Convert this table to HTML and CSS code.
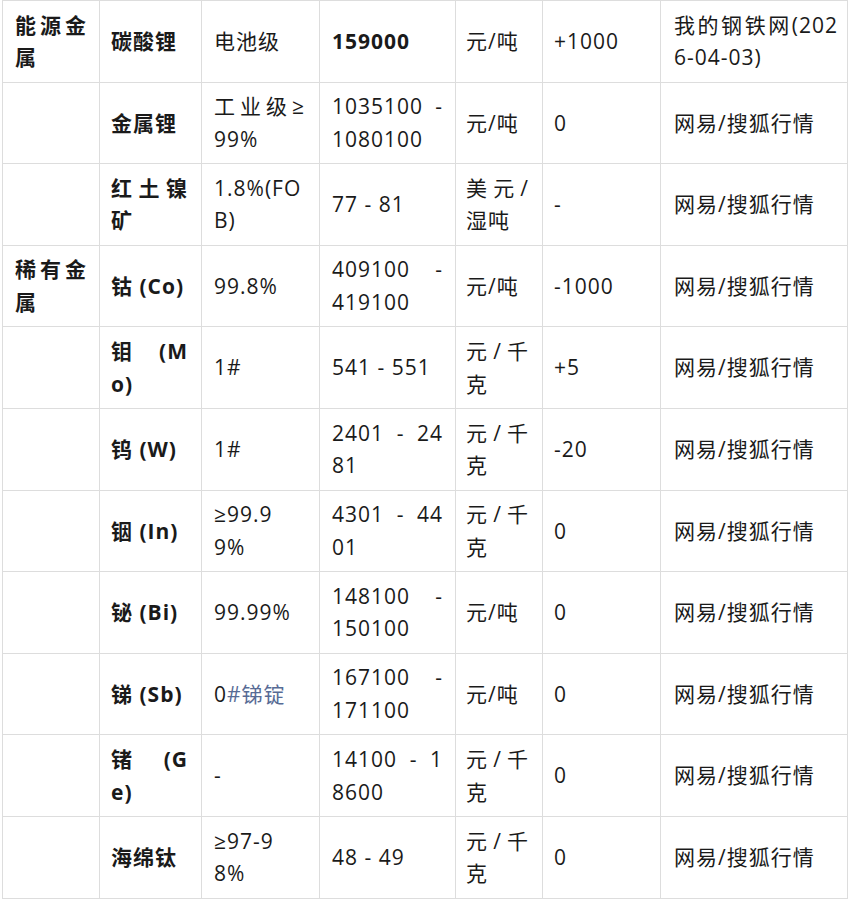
FILE: index.html
```html
<!DOCTYPE html>
<html lang="zh-CN">
<head>
<meta charset="utf-8">
<title>金属价格</title>
<link rel="stylesheet" href="styles.css">
</head>
<body>
<table class="price-table">
  <colgroup>
    <col class="c1"><col class="c2"><col class="c3"><col class="c4"><col class="c5"><col class="c6"><col class="c7">
  </colgroup>
  <tbody>
    <tr>
      <td class="cat"><span class="l j">能源金</span><span class="l">属</span></td>
      <td class="name">碳酸锂</td>
      <td>电池级</td>
      <td><strong>159000</strong></td>
      <td>元/吨</td>
      <td>+1000</td>
      <td><span class="l j">我的钢铁网(202</span><span class="l">6-04-03)</span></td>
    </tr>
    <tr>
      <td class="cat"></td>
      <td class="name">金属锂</td>
      <td><span class="l j">工业级≥</span><span class="l">99%</span></td>
      <td><span class="l j">1035100 -</span><span class="l">1080100</span></td>
      <td>元/吨</td>
      <td>0</td>
      <td>网易/搜狐行情</td>
    </tr>
    <tr>
      <td class="cat"></td>
      <td class="name"><span class="l j">红土镍</span><span class="l">矿</span></td>
      <td><span class="l">1.8%(FO</span><span class="l">B)</span></td>
      <td>77 - 81</td>
      <td><span class="l j">美元/</span><span class="l">湿吨</span></td>
      <td>-</td>
      <td>网易/搜狐行情</td>
    </tr>
    <tr>
      <td class="cat"><span class="l j">稀有金</span><span class="l">属</span></td>
      <td class="name">钴 (Co)</td>
      <td>99.8%</td>
      <td><span class="l j">409100 -</span><span class="l">419100</span></td>
      <td>元/吨</td>
      <td>-1000</td>
      <td>网易/搜狐行情</td>
    </tr>
    <tr>
      <td class="cat"></td>
      <td class="name"><span class="l j">钼 (M</span><span class="l">o)</span></td>
      <td>1#</td>
      <td>541 - 551</td>
      <td><span class="l j">元/千</span><span class="l">克</span></td>
      <td>+5</td>
      <td>网易/搜狐行情</td>
    </tr>
    <tr>
      <td class="cat"></td>
      <td class="name">钨 (W)</td>
      <td>1#</td>
      <td><span class="l j">2401 - 24</span><span class="l">81</span></td>
      <td><span class="l j">元/千</span><span class="l">克</span></td>
      <td>-20</td>
      <td>网易/搜狐行情</td>
    </tr>
    <tr>
      <td class="cat"></td>
      <td class="name">铟 (In)</td>
      <td><span class="l">≥99.9</span><span class="l">9%</span></td>
      <td><span class="l j">4301 - 44</span><span class="l">01</span></td>
      <td><span class="l j">元/千</span><span class="l">克</span></td>
      <td>0</td>
      <td>网易/搜狐行情</td>
    </tr>
    <tr>
      <td class="cat"></td>
      <td class="name">铋 (Bi)</td>
      <td>99.99%</td>
      <td><span class="l j">148100 -</span><span class="l">150100</span></td>
      <td>元/吨</td>
      <td>0</td>
      <td>网易/搜狐行情</td>
    </tr>
    <tr>
      <td class="cat"></td>
      <td class="name">锑 (Sb)</td>
      <td>0<span class="link">#锑锭</span></td>
      <td><span class="l j">167100 -</span><span class="l">171100</span></td>
      <td>元/吨</td>
      <td>0</td>
      <td>网易/搜狐行情</td>
    </tr>
    <tr>
      <td class="cat"></td>
      <td class="name"><span class="l j">锗 (G</span><span class="l">e)</span></td>
      <td>-</td>
      <td><span class="l j">14100 - 1</span><span class="l">8600</span></td>
      <td><span class="l j">元/千</span><span class="l">克</span></td>
      <td>0</td>
      <td>网易/搜狐行情</td>
    </tr>
    <tr>
      <td class="cat"></td>
      <td class="name">海绵钛</td>
      <td><span class="l">≥97-9</span><span class="l">8%</span></td>
      <td>48 - 49</td>
      <td><span class="l j">元/千</span><span class="l">克</span></td>
      <td>0</td>
      <td>网易/搜狐行情</td>
    </tr>
  </tbody>
</table>
</body>
</html>
```

FILE: styles.css
```css
html, body {
  margin: 0;
  padding: 0;
  background: #ffffff;
}

body {
  font-family: "Open Sans", "Noto Sans CJK SC", sans-serif;
  font-size: 21px;
  line-height: 32.6px;
  letter-spacing: 1px;
  color: #1a1a1a;
}

.price-table {
  margin-left: 2px;
  width: 846px;
  table-layout: fixed;
  border-collapse: separate;
  border-spacing: 0;
  border-left: 1px solid #dddddd;
  border-top: 1px solid #dddddd;
}

.c1 { width: 97px; }
.c2 { width: 102px; }
.c3 { width: 118px; }
.c4 { width: 136px; }
.c5 { width: 87px; }
.c6 { width: 118px; }
.c7 { width: 187px; }

.price-table td {
  box-sizing: border-box;
  height: 81.6px;
  padding: 0 12px;
  vertical-align: middle;
  text-align: left;
  border-right: 1px solid #dddddd;
  border-bottom: 1px solid #dddddd;
  white-space: nowrap;
}

.price-table td:nth-child(1) { padding: 0 12px 0 12px; }
.price-table td:nth-child(2) { padding: 0 13px 0 11px; }
.price-table td:nth-child(3) { padding: 0 14px 0 12px; }
.price-table td:nth-child(4) { padding: 0 12px 0 12px; }
.price-table td:nth-child(5) { padding: 0 13px 0 10px; }
.price-table td:nth-child(6) { padding: 0 12px 0 11px; }
.price-table td:nth-child(7) { padding: 0 9px 0 13px; }

.cat,
.name,
strong {
  font-weight: 700;
}

.l {
  display: block;
}

.j {
  text-align: justify;
  text-align-last: justify;
}

.link {
  color: #576b95;
}
```
